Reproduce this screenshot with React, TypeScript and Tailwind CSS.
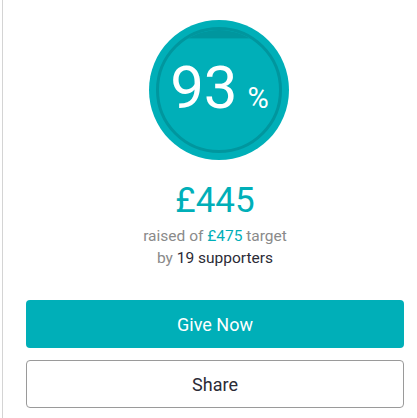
const TEAL = "#00afb8";

function ProgressCircle({ percent }: { percent: number }) {
  const inner = 60;
  const level = 70 - inner + (inner * 2 * (100 - percent)) / 100;

  return (
    <div className="relative h-[140px] w-[140px]">
      <svg width="140" height="140" viewBox="0 0 140 140" className="block">
        <defs>
          <clipPath id="inner">
            <circle cx="70" cy="70" r={inner} />
          </clipPath>
        </defs>
        <circle cx="70" cy="70" r="70" fill={TEAL} />
        <rect x="0" y="0" width="140" height={level} fill="#00969e" clipPath="url(#inner)" />
        <circle cx="70" cy="70" r="61.5" fill="none" stroke="#00969e" strokeWidth="3" />
      </svg>
      <div className="absolute inset-0 flex items-center justify-center pb-[5px] pl-[2px] text-white">
        <div className="flex items-baseline">
          <span className="text-[60px] leading-none">{percent}</span>
          <span className="ml-[10px] text-[29px] leading-none">%</span>
        </div>
      </div>
    </div>
  );
}

export default function App() {
  return (
    <div className="h-[418px] w-[417px] overflow-hidden bg-white font-['Roboto',sans-serif]">
      <div className="ml-[2px] flex h-full flex-col border-l border-[#d4d4d4] pl-[23px] pr-[13px]">
        <div className="flex justify-center pt-[20px] pl-[7px]">
          <ProgressCircle percent={93} />
        </div>

        <div className="mt-[20px] text-center text-[35px] leading-[42px] text-[#00afb8]">£445</div>
        <p className="mt-[3px] text-center text-[15.5px] leading-[22px] text-[#8a8a8a]">
          raised of <span className="text-[#00afb8]">£475</span> target
        </p>
        <p className="text-center text-[15.5px] leading-[22px] text-[#8a8a8a]">
          by <span className="text-[#2b2b36]">19 supporters</span>
        </p>

        <button className="mt-[31px] h-[48px] w-full rounded-[4px] bg-[#00afb8] text-[18px] text-white">
          Give Now
        </button>
        <button className="mt-[12px] h-[48px] w-full rounded-[4px] border border-[#9a9a9a] bg-white text-[18px] text-[#2b2b36]">
          Share
        </button>
      </div>
    </div>
  );
}
